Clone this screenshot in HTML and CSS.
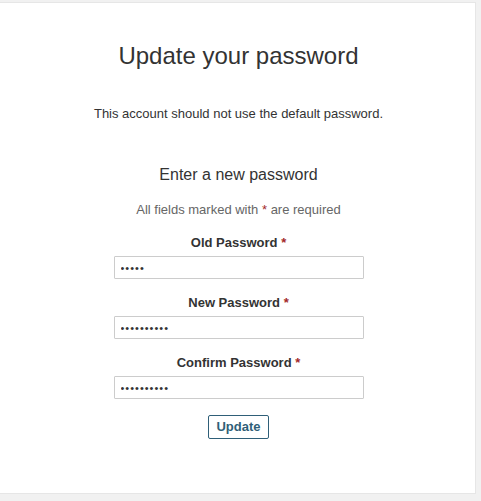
FILE: index.html
```html
<!DOCTYPE html>
<html lang="en">
<head>
  <meta charset="UTF-8">
  <title>Update your password</title>
  <link rel="stylesheet" href="styles.css">
</head>
<body>
  <div class="card">
    <h1>Update your password</h1>
    <p class="notice">This account should not use the default password.</p>

    <form class="pw-form" onsubmit="return false;">
      <h2>Enter a new password</h2>
      <p class="hint">All fields marked with <span class="req">*</span> are required</p>

      <div class="field">
        <label for="old-pw">Old Password <span class="req">*</span></label>
        <input type="password" id="old-pw" value="12345">
      </div>
      <div class="field">
        <label for="new-pw">New Password <span class="req">*</span></label>
        <input type="password" id="new-pw" value="1234567890">
      </div>
      <div class="field">
        <label for="confirm-pw">Confirm Password <span class="req">*</span></label>
        <input type="password" id="confirm-pw" value="1234567890">
      </div>

      <button type="submit" class="update-btn">Update</button>
    </form>
  </div>
</body>
</html>
```

FILE: styles.css
```css
body {
  font-family: 'Liberation Sans', Arial, sans-serif;
  background-color: #f1f1f1;
  margin: 0;
  padding: 2px 5px 6px 0;
  color: #333;
}

.card {
  background-color: #fff;
  border: 1px solid #e6e6e6;
  border-left: none;
  height: 492px;
  box-sizing: border-box;
  text-align: center;
  padding-top: 39px;
  padding-left: 2px;
}

h1 {
  font-size: 24px;
  font-weight: normal;
  margin: 0;
  line-height: 28px;
  color: #333;
}

.notice {
  font-size: 13px;
  margin: 36px 0 0;
  line-height: 16px;
}

.pw-form {
  margin-top: 43px;
  display: flex;
  flex-direction: column;
  align-items: center;
}

h2 {
  font-size: 16px;
  font-weight: normal;
  margin: 0;
  line-height: 20px;
  color: #333;
}

.hint {
  font-size: 13px;
  color: #666;
  margin: 17px 0 0;
  line-height: 16px;
}

.req {
  color: #a32a2a;
}

.field {
  display: flex;
  flex-direction: column;
  align-items: center;
  margin-top: 17px;
}

.field + .field {
  margin-top: 16px;
}

.field label {
  font-size: 13px;
  font-weight: bold;
  line-height: 16px;
  color: #333;
}

.field input {
  width: 250px;
  height: 23px;
  box-sizing: border-box;
  margin-top: 5px;
  border: 1px solid #ccc;
  border-radius: 1px;
  padding: 0 6px;
  font-size: 11px;
  letter-spacing: 1px;
  color: #333;
}

.update-btn {
  margin-top: 16px;
  background-color: #fff;
  border: 1px solid #2f5f78;
  border-radius: 2px;
  color: #2f5f78;
  font-family: 'Liberation Sans', Arial, sans-serif;
  font-size: 13px;
  font-weight: bold;
  padding: 3px 7px 4px;
  cursor: pointer;
}
```
